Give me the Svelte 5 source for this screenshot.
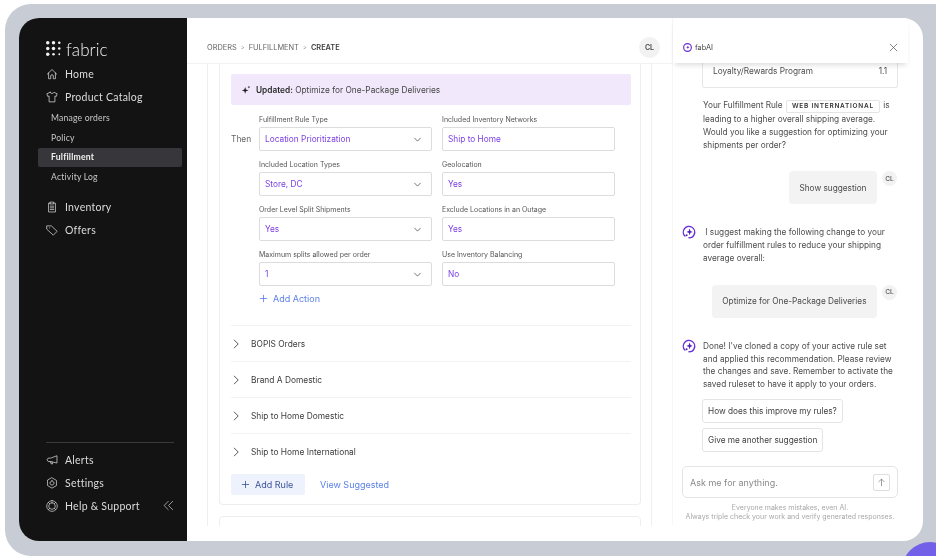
<script lang="ts">
  const navTop = [
    { label: 'Home', icon: 'home' },
    { label: 'Product Catalog', icon: 'shirt' }
  ];
  const subNav = [
    { label: 'Manage orders', active: false },
    { label: 'Policy', active: false },
    { label: 'Fulfillment', active: true },
    { label: 'Activity Log', active: false }
  ];
  const navMid = [
    { label: 'Inventory', icon: 'clipboard' },
    { label: 'Offers', icon: 'tag' }
  ];
  const navBottom = [
    { label: 'Alerts', icon: 'megaphone' },
    { label: 'Settings', icon: 'gear' },
    { label: 'Help & Support', icon: 'lifebuoy' }
  ];
  const icons: Record<string, string> = {
    home: 'M1.5 7.2 7 1.8l5.5 5.4M3 5.8V12.5H5.5V9.3a1.5 1.5 0 0 1 3 0V12.5H11V5.8',
    shirt: 'M4.8 1.5 1 3.2 2 6.3 3.6 5.8V12.7H10.4V5.8L12 6.3 13 3.2 9.2 1.5C8.8 3.4 5.2 3.4 4.8 1.5Z',
    clipboard: 'M5 2.5H3V12.8H11V2.5H9M5 1.3H9V3.5H5ZM5 6H9M5 8H9M5 10H9',
    tag: 'M1.2 2.2H6.2L13 8.5 8.5 13 1.2 6.3ZM4 4.6h.1',
    megaphone: 'M12.8 2.5V10.5L5 8.8H2.5L1.2 6.8 2.5 4.8H5ZM5 8.8 6 11.5H7.8L7 9.2',
    gear: 'M7 1 12.2 4V10L7 13 1.8 10V4ZM7 4.6a2.4 2.4 0 1 0 .01 0Z',
    lifebuoy: 'M7 .8a6.2 6.2 0 1 0 .01 0ZM7 3.2a3.8 3.8 0 1 0 .01 0ZM2.8 2.8 4.4 4.4M11.2 2.8 9.6 4.4M2.8 11.2 4.4 9.6M11.2 11.2 9.6 9.6'
  };

  const fields = [
    { label: 'Fulfillment Rule Type', value: 'Location Prioritization', select: true },
    { label: 'Included Inventory Networks', value: 'Ship to Home', select: false },
    { label: 'Included Location Types', value: 'Store, DC', select: true },
    { label: 'Geolocation', value: 'Yes', select: false },
    { label: 'Order Level Split Shipments', value: 'Yes', select: true },
    { label: 'Exclude Locations in an Outage', value: 'Yes', select: false },
    { label: 'Maximum splits allowed per order', value: '1', select: true },
    { label: 'Use Inventory Balancing', value: 'No', select: false }
  ];
  const rules = ['BOPIS Orders', 'Brand A Domestic', 'Ship to Home Domestic', 'Ship to Home International'];
  const dots = [
    [1.5, 1.5, 1.5], [6.5, 1.5, 1.5], [11.5, 1.5, 1.1],
    [1.5, 6.5, 1.5], [6.5, 6.5, 1.5], [11.5, 6.5, 1.1],
    [1.5, 11.5, 1.5], [6.5, 11.5, 1.1], [11.5, 11.5, 0.8]
  ];
</script>

{#snippet navIcon(name: string)}
  <svg class="nav-icon" viewBox="0 0 14 14" fill="none" stroke="currentColor" stroke-width="0.85" stroke-linejoin="round" stroke-linecap="round"><path d={icons[name]} /></svg>
{/snippet}

{#snippet aiIcon()}
  <svg class="ai-icon" viewBox="0 0 14 14" fill="none">
    <path d="M2.9 11.1A5.7 5.7 0 1 1 12.2 9.4C11.4 11.4 9.4 12.8 7 12.8" stroke="#6a2fd8" stroke-width="1.4" stroke-linecap="round" />
    <path d="M7.6 3.6 8.5 6 10.8 6.9 8.5 7.8 7.6 10.2 6.7 7.8 4.4 6.9 6.7 6Z" fill="#4f1fb8" />
    <circle cx="4.6" cy="10.2" r="1" fill="#4f1fb8" />
  </svg>
{/snippet}

<div class="frame">
  <div class="window">
    <aside class="sidebar">
      <div class="logo">
        <svg class="logo-mark" viewBox="0 0 13 13" fill="#f2f2f2">
          {#each dots as d}<circle cx={d[0]} cy={d[1]} r={d[2]} />{/each}
        </svg>
        <span>fabric</span>
      </div>
      {#each navTop as item}
        <div class="nav-item">{@render navIcon(item.icon)}<span>{item.label}</span></div>
      {/each}
      <div class="sub-nav">
        {#each subNav as item}
          <div class="sub-item" class:active={item.active}>{item.label}</div>
        {/each}
      </div>
      {#each navMid as item}
        <div class="nav-item">{@render navIcon(item.icon)}<span>{item.label}</span></div>
      {/each}
      <div class="side-foot">
        {#each navBottom as item}
          <div class="nav-item">
            {@render navIcon(item.icon)}<span>{item.label}</span>
            {#if item.icon === 'lifebuoy'}
              <svg class="collapse" viewBox="0 0 10 10" fill="none" stroke="currentColor" stroke-width="0.8"><path d="M5 1 1 5l4 4M9 1 5 5l4 4" /></svg>
            {/if}
          </div>
        {/each}
      </div>
    </aside>

    <main class="main">
      <header class="topbar">
        <div class="crumbs">
          <span>ORDERS</span><i>&gt;</i><span>FULFILLMENT</span><i>&gt;</i><b>CREATE</b>
        </div>
        <div class="avatar big">CL</div>
      </header>
      <div class="scroll">
        <section class="card">
          <div class="updated">
            <svg viewBox="0 0 12 12" fill="#222"><path d="M5 2.5 6 5.5 9 6.5 6 7.5 5 10.5 4 7.5 1 6.5 4 5.5ZM9.5.8 10 2 11.2 2.5 10 3 9.5 4.2 9 3 7.8 2.5 9 2Z" /></svg>
            <span><b>Updated:</b> Optimize for One-Package Deliveries</span>
          </div>
          <div class="then-row">
            <div class="then">Then</div>
            <div class="form-grid">
              {#each fields as f}
                <div class="field">
                  <div class="field-label">{f.label}</div>
                  <div class="input">
                    <span>{f.value}</span>
                    {#if f.select}
                      <svg viewBox="0 0 10 10" fill="none" stroke="#555" stroke-width="0.9"><path d="M1.5 3.2 5 6.8 8.5 3.2" /></svg>
                    {/if}
                  </div>
                </div>
              {/each}
            </div>
          </div>
          <div class="add-action">
            <svg viewBox="0 0 10 10" fill="none" stroke="currentColor" stroke-width="0.9"><path d="M5 1V9M1 5H9" /></svg>
            Add Action
          </div>
          <div class="rules">
            {#each rules as rule}
              <div class="rule">
                <svg viewBox="0 0 10 10" fill="none" stroke="#444" stroke-width="0.9"><path d="M3 .8 7.2 5 3 9.2" /></svg>
                <span>{rule}</span>
              </div>
            {/each}
          </div>
          <div class="card-actions">
            <div class="add-rule">
              <svg viewBox="0 0 10 10" fill="none" stroke="currentColor" stroke-width="0.9"><path d="M5 1V9M1 5H9" /></svg>
              Add Rule
            </div>
            <div class="view-suggested">View Suggested</div>
          </div>
        </section>
        <section class="card next"></section>
      </div>
    </main>

    <aside class="chat">
      <div class="chat-col">
        <header class="chat-head">
          <div class="chat-title">
            <svg viewBox="0 0 14 14"><circle cx="7" cy="7" r="6" fill="none" stroke="#6a2fd8" stroke-width="1.8" /><path d="M7.6 4 8.3 6 10.2 6.7 8.3 7.4 7.6 9.4 6.9 7.4 5 6.7 6.9 6Z" fill="#4f1fb8" /></svg>
            fabAI
          </div>
          <svg class="close" viewBox="0 0 10 10" fill="none" stroke="#555" stroke-width="0.8"><path d="M1 1 9 9M9 1 1 9" /></svg>
        </header>
        <div class="chat-body">
          <div class="table-card"><span>Loyalty/Rewards Program</span><span>1.1</span></div>
          <p class="msg first">
            Your Fulfillment Rule <span class="code">WEB INTERNATIONAL</span> is leading to a higher overall shipping average. Would you like a suggestion for optimizing your shipments per order?
          </p>
          <div class="user-row one">
            <div class="bubble">Show suggestion</div>
            <div class="avatar">CL</div>
          </div>
          <div class="ai-row two">
            {@render aiIcon()}
            <p class="msg">&nbsp;I suggest making the following change to your order fulfillment rules to reduce your shipping average overall:</p>
          </div>
          <div class="user-row three">
            <div class="bubble">Optimize for One-Package Deliveries</div>
            <div class="avatar">CL</div>
          </div>
          <div class="ai-row four">
            {@render aiIcon()}
            <p class="msg">Done! I've cloned a copy of your active rule set and applied this recommendation. Please review the changes and save. Remember to activate the saved ruleset to have it apply to your orders.</p>
          </div>
          <div class="chips">
            <div class="chip">How does this improve my rules?</div>
            <div class="chip">Give me another suggestion</div>
          </div>
        </div>
        <div class="composer">
          <span>Ask me for anything.</span>
          <div class="send">
            <svg viewBox="0 0 10 10" fill="none" stroke="#666" stroke-width="0.7"><path d="M5 9V1.2M1.8 4.4 5 1.2 8.2 4.4" /></svg>
          </div>
        </div>
        <div class="disclaimer">Everyone makes mistakes, even AI.<br />Always triple check your work and verify generated responses.</div>
      </div>
    </aside>
  </div>
  <div class="blob"></div>
</div>

<style>
  :global(body) {
    margin: 0;
    background: #fff;
  }

  .frame {
    position: relative;
    box-sizing: border-box;
    width: 931px;
    height: 552px;
    margin: 4px 0 0 5px;
    padding: 14px 13px 15px 14px;
    background: #c8cdd5;
    border-radius: 26px 0 0 26px;
    overflow: hidden;
    font-family: Inter, 'Liberation Sans', sans-serif;
    color: #3a3a3a;
    filter: blur(0.35px);
  }

  .window {
    display: flex;
    height: 523px;
    background: #fff;
    border-radius: 20px;
    overflow: hidden;
  }

  .blob {
    position: absolute;
    right: -22px;
    bottom: -42px;
    width: 56px;
    height: 56px;
    border-radius: 50%;
    background: #7360e8;
  }

  /* sidebar */
  .sidebar {
    flex: none;
    box-sizing: border-box;
    width: 168px;
    padding: 23px 5px 0 19px;
    display: flex;
    flex-direction: column;
    background: #131314;
    color: #dcdcdc;
    font-family: Lato, sans-serif;
  }

  .logo {
    display: flex;
    align-items: center;
    gap: 5px;
    height: 17px;
    margin: 0 0 4px 8px;
    color: #f2f2f2;
    font-size: 17px;
    font-weight: 300;
    letter-spacing: 0.1px;
  }

  .logo-mark {
    width: 15px;
    height: 15px;
    margin-top: -2px;
  }

  .nav-item {
    display: flex;
    align-items: center;
    gap: 7px;
    height: 23px;
    margin-left: 8px;
    font-size: 10.5px;
    letter-spacing: 0.25px;
  }

  .nav-icon {
    flex: none;
    width: 12px;
    height: 12px;
  }

  .sub-nav {
    display: flex;
    flex-direction: column;
    gap: 0.6px;
    margin: 1px 0 9px;
    font-size: 8.6px;
    letter-spacing: 0.2px;
  }

  .sub-item {
    height: 19px;
    line-height: 19px;
    padding-left: 13px;
    border-radius: 2px;
    color: #c8c8c8;
  }

  .sub-item.active {
    background: #37373b;
    color: #f0f0f0;
    font-weight: 700;
  }

  .side-foot {
    margin: auto 8px 24px 8px;
    padding-top: 5px;
    border-top: 1px solid #3a3a3c;
  }

  .side-foot .nav-item {
    margin-left: 0;
  }

  .collapse {
    width: 11px;
    height: 11px;
    margin-left: auto;
    color: #aaa;
  }

  /* main column */
  .main {
    flex: none;
    width: 485px;
    display: flex;
    flex-direction: column;
  }

  .topbar {
    flex: none;
    box-sizing: border-box;
    height: 46px;
    padding: 14px 12px 0 20px;
    display: flex;
    align-items: center;
    justify-content: space-between;
    border-bottom: 1px solid #f2f2f3;
  }

  .crumbs {
    display: flex;
    align-items: center;
    gap: 4px;
    font-size: 7.4px;
    color: #666;
  }

  .crumbs i {
    font-style: normal;
    font-size: 6px;
    color: #999;
  }

  .crumbs b {
    color: #3c3c3c;
    font-weight: 600;
  }

  .avatar {
    flex: none;
    width: 15px;
    height: 15px;
    border-radius: 50%;
    background: #f2f2f3;
    color: #555;
    display: flex;
    align-items: center;
    justify-content: center;
    font-size: 6.6px;
    font-weight: 500;
  }

  .avatar.big {
    width: 21px;
    height: 21px;
    font-weight: 600;
    font-size: 7px;
    color: #444;
  }

  .scroll {
    flex: none;
    box-sizing: border-box;
    height: 462px;
    margin-left: 20px;
    width: 445px;
    padding: 0 10px 0 11px;
    border-left: 1px solid #efeff1;
    border-right: 1px solid #efeff1;
    overflow: hidden;
  }

  .card {
    box-sizing: border-box;
    width: 422px;
    height: 441px;
    padding: 10px 9px 0 11px;
    border: 1px solid #eeeef0;
    border-top: 0;
    border-radius: 0 0 4px 4px;
  }

  .card.next {
    height: 30px;
    margin-top: 11px;
    border-top: 1px solid #eeeef0;
    border-radius: 4px 4px 0 0;
  }

  .updated {
    box-sizing: border-box;
    height: 31px;
    padding-left: 10px;
    display: flex;
    align-items: center;
    gap: 5px;
    background: #f1e9fb;
    border-radius: 2px;
    font-size: 8.3px;
    color: #444;
  }

  .updated svg {
    width: 10px;
    height: 10px;
  }

  .updated b {
    font-weight: 600;
    color: #2c2c2c;
  }

  .then-row {
    display: flex;
    margin-top: 10px;
  }

  .then {
    width: 28px;
    margin-top: 19px;
    font-size: 8.4px;
    color: #666;
  }

  .form-grid {
    display: grid;
    grid-template-columns: 173px 173px;
    column-gap: 10px;
    row-gap: 9px;
  }

  .field-label {
    height: 12px;
    line-height: 10px;
    font-size: 7px;
    color: #555;
  }

  .input {
    box-sizing: border-box;
    height: 24px;
    padding: 0 9px 0 5px;
    display: flex;
    align-items: center;
    justify-content: space-between;
    border: 1px solid #dcdcdf;
    border-radius: 2px;
    font-size: 8.3px;
    color: #7b3fe4;
  }

  .input svg {
    width: 9px;
    height: 9px;
  }

  .add-action {
    display: flex;
    align-items: center;
    gap: 5px;
    margin: 6px 0 0 28px;
    height: 12px;
    font-size: 9px;
    color: #5b80e8;
  }

  .add-action svg,
  .add-rule svg {
    width: 9px;
    height: 9px;
  }

  .rules {
    margin-top: 21px;
    border-top: 1px solid #f2f2f3;
  }

  .rule {
    box-sizing: border-box;
    height: 36px;
    display: flex;
    align-items: center;
    gap: 10px;
    border-bottom: 1px solid #f2f2f3;
    font-size: 8.4px;
    color: #3c3c3c;
  }

  .rule:last-child {
    border-bottom: 0;
  }

  .rule svg {
    width: 10px;
    height: 10px;
  }

  .card-actions {
    display: flex;
    align-items: center;
    gap: 15px;
    margin-top: 4px;
  }

  .add-rule {
    box-sizing: border-box;
    width: 74px;
    height: 21px;
    padding-left: 10px;
    display: flex;
    align-items: center;
    gap: 5px;
    background: #edf2fd;
    border-radius: 2px;
    font-size: 9px;
    color: #3d5398;
  }

  .view-suggested {
    font-size: 9px;
    color: #5b80e8;
  }

  /* chat */
  .chat {
    flex: none;
    width: 251px;
  }

  .chat-col {
    box-sizing: border-box;
    width: 236px;
    height: 507px;
    display: flex;
    flex-direction: column;
    border-left: 1px solid #f6f6f7;
  }

  .chat-head {
    flex: none;
    position: relative;
    z-index: 1;
    box-sizing: border-box;
    height: 45px;
    padding: 14px 10px 0 10px;
    display: flex;
    align-items: center;
    justify-content: space-between;
    background: #fff;
    box-shadow: 0 4px 5px -2px rgba(0, 0, 0, 0.14);
  }

  .chat-title {
    display: flex;
    align-items: center;
    gap: 3px;
    font-size: 7.3px;
    color: #444;
  }

  .chat-title svg {
    width: 9px;
    height: 9px;
  }

  .close {
    width: 9px;
    height: 9px;
  }

  .chat-body {
    flex: 1;
    min-height: 0;
    padding-left: 29px;
    font-size: 8.25px;
    color: #4c4c4c;
    overflow: hidden;
  }

  .table-card {
    box-sizing: border-box;
    width: 196px;
    height: 25px;
    padding: 3px 10px 0;
    display: flex;
    justify-content: space-between;
    border: 1px solid #e6e6e8;
    border-top: 0;
    border-radius: 0 0 3px 3px;
  }

  .msg {
    margin: 0;
    margin-left: 1px;
    width: 196px;
    line-height: 12.8px;
  }

  .msg.first {
    margin-top: 11px;
  }

  .code {
    display: inline-block;
    box-sizing: border-box;
    height: 13px;
    line-height: 11.5px;
    padding: 0 5px;
    margin: 0 1px;
    border: 1px solid #e4e4e6;
    border-radius: 2px;
    font-size: 6.5px;
    font-weight: 600;
    letter-spacing: 0.75px;
    color: #333;
  }

  .user-row {
    width: 195px;
    margin-top: 20px;
    display: flex;
    justify-content: flex-end;
    align-items: flex-start;
    gap: 5px;
  }

  .bubble {
    box-sizing: border-box;
    height: 33px;
    padding: 0 10.5px;
    display: flex;
    align-items: center;
    background: #f3f3f4;
    border-radius: 4px;
    color: #4a4a4a;
  }

  .ai-row {
    position: relative;
    width: 196px;
  }

  .ai-row.two {
    margin-top: 22px;
  }

  .ai-row.four {
    margin-top: 22px;
  }

  .ai-icon {
    position: absolute;
    left: -20px;
    top: -1px;
    width: 14px;
    height: 14px;
  }

  .chips {
    display: flex;
    flex-direction: column;
    align-items: flex-start;
    gap: 5px;
    margin-top: 8px;
  }

  .chip {
    box-sizing: border-box;
    height: 24px;
    line-height: 22px;
    padding: 0 5px;
    border: 1px solid #e4e4e6;
    border-radius: 3px;
    color: #3f3f3f;
  }

  .composer {
    flex: none;
    box-sizing: border-box;
    width: 216px;
    height: 32px;
    margin-left: 9px;
    padding: 0 7px;
    display: flex;
    align-items: center;
    justify-content: space-between;
    border: 1px solid #e4e4e6;
    border-radius: 5px;
    font-size: 9px;
    color: #8a8a8a;
  }

  .send {
    box-sizing: border-box;
    width: 17px;
    height: 17px;
    display: flex;
    align-items: center;
    justify-content: center;
    border: 1px solid #dedee0;
    border-radius: 2px;
  }

  .send svg {
    width: 9px;
    height: 9px;
  }

  .disclaimer {
    flex: none;
    width: 216px;
    height: 18px;
    margin: 5px 0 4px 9px;
    line-height: 9px;
    text-align: center;
    font-size: 7px;
    color: #a8a8a8;
    white-space: nowrap;
  }
</style>
